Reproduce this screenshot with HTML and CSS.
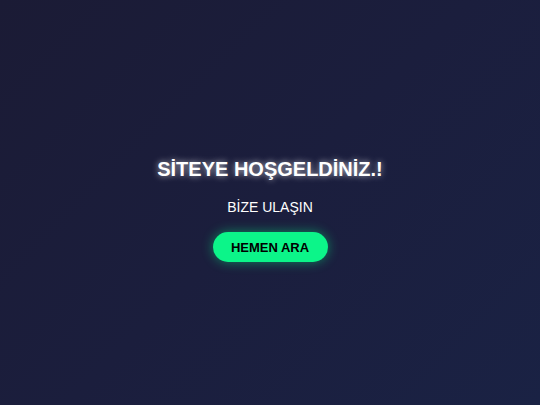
FILE: index.html
```html
<!DOCTYPE html>
<html lang="tr">
<head>
<meta charset="utf-8">
<link rel="stylesheet" href="styles.css">
</head>
<body>
<main class="hero">
  <h1 class="title">SİTEYE HOŞGELDİNİZ.!</h1>
  <p class="subtitle">BİZE ULAŞIN</p>
  <a class="cta" href="#">HEMEN ARA</a>
</main>
</body>
</html>
```
FILE: styles.css
```css
html, body {
  margin: 0;
  padding: 0;
  height: 100%;
}
body {
  background: linear-gradient(135deg, #1b1b35 0%, #1b1e3d 50%, #1a2244 100%);
  font-family: "Liberation Sans", Arial, sans-serif;
  color: #ffffff;
}
.hero {
  min-height: 100vh;
  display: flex;
  flex-direction: column;
  align-items: center;
  justify-content: center;
  padding-top: 14px;
  box-sizing: border-box;
}
.title {
  margin: 0;
  font-size: 20px;
  font-weight: bold;
  line-height: 24px;
  text-shadow: 0 0 6px rgba(255, 255, 255, 0.7);
}
.subtitle {
  margin: 18px 0 0;
  font-size: 14px;
  line-height: 16px;
}
.cta {
  margin-top: 17px;
  display: flex;
  align-items: center;
  justify-content: center;
  width: 115px;
  height: 30px;
  border-radius: 15px;
  background: #0cf589;
  color: #000000;
  font-size: 13px;
  font-weight: bold;
  text-decoration: none;
  box-shadow: 0 0 12px rgba(0, 255, 136, 0.45);
}
```
